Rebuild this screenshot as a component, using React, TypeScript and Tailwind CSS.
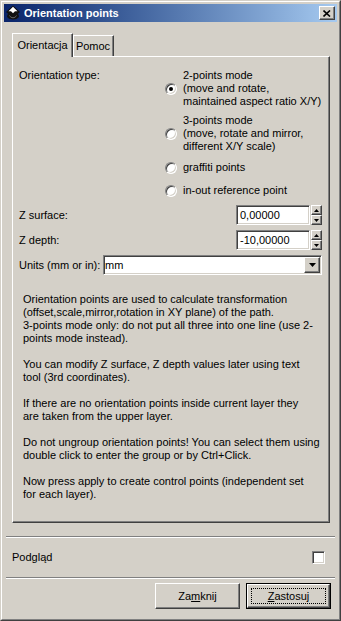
const raised =
  "border border-t-white border-l-white border-r-[#404040] border-b-[#404040] shadow-[inset_-1px_-1px_#808080]";
const sunken =
  "border border-t-[#808080] border-l-[#808080] border-r-white border-b-white shadow-[inset_1px_1px_#404040,inset_-1px_-1px_#d4d0c8]";

function Radio({ checked }: { checked?: boolean }) {
  return (
    <div className={`w-[12px] h-[12px] rounded-full bg-white flex items-center justify-center shrink-0 ${sunken}`}>
      {checked && <div className="w-[4px] h-[4px] rounded-full bg-black" />}
    </div>
  );
}

function RadioRow({ lines, checked }: { lines: string[]; checked?: boolean }) {
  return (
    <div className="flex items-center min-h-[17px] gap-[6px]">
      <Radio checked={checked} />
      <div>
        {lines.map((l) => (
          <div key={l} className="h-[13px] leading-[13px] whitespace-nowrap">
            {l}
          </div>
        ))}
      </div>
    </div>
  );
}

function Arrow({ up, size = "small" }: { up?: boolean; size?: "small" | "big" }) {
  const w = size === "big" ? 7 : 5;
  const h = size === "big" ? 4 : 3;
  const d = up ? `M0 ${h} L${w / 2} 0 L${w} ${h} Z` : `M0 0 L${w} 0 L${w / 2} ${h} Z`;
  return (
    <svg width={w} height={h} viewBox={`0 0 ${w} ${h}`}>
      <path d={d} fill="#000" />
    </svg>
  );
}

function SpinField({ label, value }: { label: string; value: string }) {
  return (
    <div className="flex items-center justify-between h-[20px]">
      <span>{label}</span>
      <div className="flex">
        <div className={`w-[74px] h-[20px] bg-white flex items-center pl-[3px] text-[11px] ${sunken}`}>{value}</div>
        <div className="flex flex-col w-[11px] ml-[1px]">
          <div className={`h-[10px] flex items-center justify-center bg-[#d4d0c8] ${raised}`}>
            <Arrow up />
          </div>
          <div className={`h-[10px] flex items-center justify-center bg-[#d4d0c8] ${raised}`}>
            <Arrow />
          </div>
        </div>
      </div>
    </div>
  );
}

// inkscape-ish window icon
function InkIcon() {
  return (
    <svg width="16" height="16" viewBox="0 0 16 16">
      <path d="M8 0.5 L15 7 L13 8.8 L14 11 C14 15.5 2 15.5 2 11 L3 8.8 L1 7 Z" fill="#111" />
      <path d="M8 1.8 L12.5 6.2 L10 6.2 L8 8.2 L6 6.2 L3.5 6.2 Z" fill="#fff" />
      <path d="M4.5 10.5 C6 13.5 10 13.5 11.5 10.5" stroke="#666" strokeWidth="1" fill="none" />
    </svg>
  );
}

const help: string[] = [
  "Orientation points are used to calculate transformation",
  "(offset,scale,mirror,rotation in XY plane) of the path.",
  "3-points mode only: do not put all three into one line (use 2-",
  "points mode instead).",
  "",
  "You can modify Z surface, Z depth values later using text",
  "tool (3rd coordinates).",
  "",
  "If there are no orientation points inside current layer they",
  "are taken from the upper layer.",
  "",
  "Do not ungroup orientation points! You can select them using",
  "double click to enter the group or by Ctrl+Click.",
  "",
  "Now press apply to create control points (independent set",
  "for each layer).",
];

export default function App() {
  return (
    <div className="w-[341px] h-[621px] bg-[#d4d0c8] text-black text-[11px] font-['Liberation_Sans',Arial,sans-serif] border border-t-[#d4d0c8] border-l-[#d4d0c8] border-r-[#404040] border-b-[#404040]">
      <div className="h-full border border-t-white border-l-white border-r-[#808080] border-b-[#808080] p-[2px] flex flex-col">
        {/* title bar */}
        <div className="h-[18px] bg-gradient-to-r from-[#0a246a] to-[#a6caf0] flex items-center pl-[1px] pr-[2px]">
          <InkIcon />
          <span className="ml-[3px] text-white font-bold text-[11px]">Orientation points</span>
          <div className={`ml-auto w-[16px] h-[14px] bg-[#d4d0c8] flex items-center justify-center ${raised}`}>
            <svg width="8" height="7" viewBox="0 0 8 7">
              <path d="M0.5 0.5 L7 6.5 M7 0.5 L0.5 6.5" stroke="#000" strokeWidth="1.6" />
            </svg>
          </div>
        </div>

        {/* tabs */}
        <div className="pl-[8px] pt-[11px]">
          <div className="flex items-end h-[23px]">
            <div className="relative z-10 w-[61px] h-[24px] -mb-[1px] bg-[#d4d0c8] border-t border-l border-r border-t-white border-l-white border-r-[#404040] shadow-[inset_-1px_0_#808080] flex justify-center pt-[5px] leading-[13px]">
              Orientacja
            </div>
            <div className="w-[41px] h-[21px] bg-[#d4d0c8] border-t border-r border-t-white border-r-[#404040] shadow-[inset_-1px_0_#808080,inset_1px_0_#fff] flex justify-center pt-[4px] leading-[13px]">
              Pomoc
            </div>
          </div>

          <div className="w-[318px] h-[467px] border border-t-white border-l-white border-r-[#404040] border-b-[#404040] shadow-[inset_-1px_-1px_#808080] pl-[6px] pr-[7px] pt-[12px]">
            <div className="flex">
              <div className="w-[146px] leading-[13px]">Orientation type:</div>
              <div className="flex flex-col gap-[6px]">
                <RadioRow checked lines={["2-points mode", "(move and rotate,", "maintained aspect ratio X/Y)"]} />
                <RadioRow lines={["3-points mode", "(move, rotate and mirror,", "different X/Y scale)"]} />
                <RadioRow lines={["graffiti points"]} />
                <RadioRow lines={["in-out reference point"]} />
              </div>
            </div>

            <div className="mt-[6px] flex flex-col gap-[5px]">
              <SpinField label="Z surface:" value="0,00000" />
              <SpinField label="Z depth:" value="-10,00000" />
              <div className="flex items-center h-[20px]">
                <span>Units (mm or in):</span>
                <div className={`ml-auto w-[219px] h-[20px] bg-white flex items-center ${sunken}`}>
                  <span className="pl-[1px]">mm</span>
                  <div className={`ml-auto mr-[1px] w-[16px] h-[16px] bg-[#d4d0c8] flex items-center justify-center ${raised}`}>
                    <Arrow size="big" />
                  </div>
                </div>
              </div>
            </div>

            <div className="mt-[18px] pl-[4px]">
              {help.map((l, i) => (
                <div key={i} className="h-[13px] leading-[13px] whitespace-nowrap">
                  {l}
                </div>
              ))}
            </div>
          </div>
        </div>

        {/* preview row */}
        <div className="mt-[13px] mx-[2px] h-[2px] border-t border-t-[#808080] border-b border-b-white" />
        <div className="h-[39px] flex items-center pl-[8px] pr-[12px]">
          <span>Podgląd</span>
          <div className={`ml-auto w-[13px] h-[13px] bg-white ${sunken}`} />
        </div>
        <div className="mx-[2px] h-[2px] border-t border-t-[#808080] border-b border-b-white" />

        {/* buttons */}
        <div className="mt-[4px] flex justify-end gap-[6px] pr-[6px]">
          <div className={`w-[85px] h-[26px] flex items-center justify-center ${raised}`}>
            <span>
              Za<span className="underline">m</span>knij
            </span>
          </div>
          <div className="w-[85px] h-[26px] border border-black">
            <div className={`h-full flex items-center justify-center p-[3px] ${raised}`}>
              <div className="w-full h-full border border-dotted border-black flex items-center justify-center">
                <span>
                  <span className="underline">Z</span>astosuj
                </span>
              </div>
            </div>
          </div>
        </div>
      </div>
    </div>
  );
}
